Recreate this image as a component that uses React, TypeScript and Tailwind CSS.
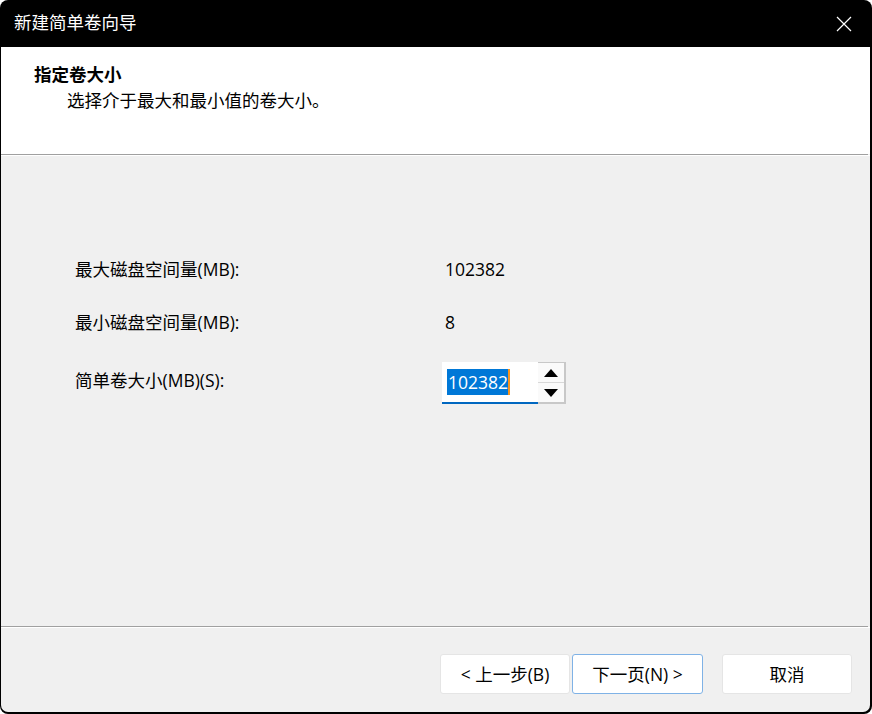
import React from "react";

const font = { fontFamily: '"Open Sans", "Noto Sans CJK SC", sans-serif' };

export default function App() {
  return (
    <div className="w-[872px] h-[714px] bg-white" style={font}>
      <div className="w-[872px] h-[714px] bg-black rounded-[8px] flex flex-col pl-[1px] pr-[2px] pb-[2px]">
        {/* title bar */}
        <div className="h-[47px] flex items-center justify-between pl-[13px] pr-[14px] shrink-0">
          <span className="text-white text-[17.5px] leading-none -mt-[2px]">新建简单卷向导</span>
          <svg width="16" height="16" viewBox="0 0 16 16" className="mr-[4px]">
            <path d="M1 1 L15 15 M15 1 L1 15" stroke="white" strokeWidth="1.2" fill="none" />
          </svg>
        </div>
        <div className="flex-1 flex flex-col rounded-b-[7px] overflow-hidden bg-[#f0f0f0]">
          {/* header */}
          <div className="h-[107px] bg-white shrink-0 pl-[33px] pt-[14px]">
            <div className="text-[17.5px] font-bold text-black leading-[26px]">指定卷大小</div>
            <div className="text-[17.5px] text-black leading-[26px] pl-[33px]">选择介于最大和最小值的卷大小。</div>
          </div>
          <div className="h-[1px] bg-[#a0a0a0] shrink-0 mr-[2px]" />
          <div className="h-[1px] bg-white shrink-0" />
          {/* body */}
          <div className="flex-1 pl-[74px] pt-[99px] text-[17.5px] text-black">
            <div className="flex items-center h-[28px]">
              <span className="w-[370px]">最大磁盘空间量(MB):</span>
              <span>102382</span>
            </div>
            <div className="flex items-center h-[28px] mt-[25px]">
              <span className="w-[370px]">最小磁盘空间量(MB):</span>
              <span>8</span>
            </div>
            <div className="flex items-center mt-[26px]">
              <span className="w-[367px] mb-[6px]">简单卷大小(MB)(S):</span>
              <div className="flex h-[42px]">
                <div className="w-[96px] h-[42px] bg-white border-b-2 border-[#0067c0] flex items-center pl-[5px]">
                  <span className="bg-[#0078d7] text-white h-[26px] leading-[26px] pl-[1px] border-r-2 border-[#f7931e]">102382</span>
                </div>
                <div className="w-[28px] h-[42px] flex flex-col border-r-2 border-b-2 border-t border-[#c8c8c8] bg-white">
                  <div className="flex-1 flex items-center justify-center border-b border-[#d8d8d8] bg-[#fafafa]">
                    <svg width="14" height="8" viewBox="0 0 14 8"><path d="M7 0 L14 8 L0 8 Z" fill="black" /></svg>
                  </div>
                  <div className="flex-1 flex items-center justify-center bg-[#fafafa]">
                    <svg width="14" height="8" viewBox="0 0 14 8"><path d="M0 0 L14 0 L7 8 Z" fill="black" /></svg>
                  </div>
                </div>
              </div>
            </div>
          </div>
          <div className="h-[1px] bg-[#a0a0a0] shrink-0 mr-[2px]" />
          <div className="h-[1px] bg-white shrink-0" />
          {/* footer */}
          <div className="h-[84px] shrink-0 flex items-start pt-[26px] pl-[439px] text-[17.5px] text-black">
            <button className="w-[130px] h-[40px] bg-white border border-[#e5e5e5] rounded-[3px] flex items-center justify-center">
              &lt; 上一步(B)
            </button>
            <button className="w-[131px] h-[40px] ml-[2px] bg-white border border-[#7fb2e6] rounded-[3px] flex items-center justify-center">
              下一页(N) &gt;
            </button>
            <button className="w-[130px] h-[40px] ml-[19px] bg-white border border-[#e5e5e5] rounded-[3px] flex items-center justify-center">
              取消
            </button>
          </div>
        </div>
      </div>
    </div>
  );
}
